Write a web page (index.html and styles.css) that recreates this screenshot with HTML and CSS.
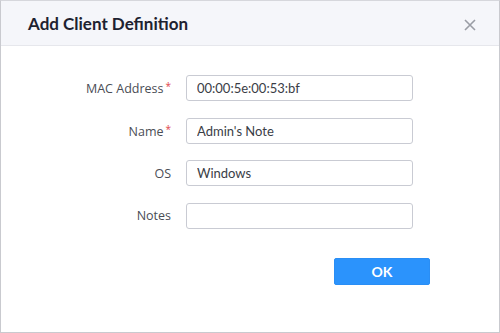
FILE: index.html
```html
<!DOCTYPE html>
<html>
<head>
<meta charset="utf-8">
<link rel="stylesheet" href="styles.css">
</head>
<body>
<div class="dialog">
  <div class="dialog-header">
    <h1 class="dialog-title">Add Client Definition</h1>
    <button class="close-btn" aria-label="Close">
      <svg width="12" height="12" viewBox="0 0 12 12"><path d="M1 1L11 11M11 1L1 11" stroke="#9a9da5" stroke-width="1.6" fill="none"/></svg>
    </button>
  </div>
  <div class="dialog-body">
    <form class="form">
      <label class="form-label">MAC Address<span class="req">*</span></label>
      <input class="form-input" type="text" value="00:00:5e:00:53:bf">
      <label class="form-label">Name<span class="req">*</span></label>
      <input class="form-input" type="text" value="Admin's Note">
      <label class="form-label">OS</label>
      <input class="form-input" type="text" value="Windows">
      <label class="form-label">Notes</label>
      <input class="form-input" type="text" value="">
    </form>
    <div class="actions">
      <button class="ok-btn" type="button">OK</button>
    </div>
  </div>
</div>
</body>
</html>
```
FILE: styles.css
```css
* { box-sizing: border-box; }
html, body { margin: 0; padding: 0; background: #fff; }
body { font-family: "Open Sans", "Noto Sans", sans-serif; }

.dialog {
  width: 500px;
  height: 333px;
  border: 1px solid #c9cacf;
  border-top-color: #d6d7dc;
  background: #fff;
  display: flex;
  flex-direction: column;
}

.dialog-header {
  height: 45px;
  background: #f5f6fa;
  border-bottom: 1px solid #e6e7ec;
  display: flex;
  align-items: center;
  justify-content: space-between;
  padding: 0 23px 0 27px;
}

.dialog-title {
  margin: 0;
  font-family: "Lato", "Open Sans", sans-serif;
  font-size: 17px;
  font-weight: 700;
  color: #1e2230;
  padding-top: 1px;
}

.close-btn {
  border: 0;
  background: none;
  padding: 0;
  width: 12px;
  height: 12px;
  display: flex;
  margin-top: 3px;
}

.dialog-body {
  padding: 29px 0 0 0;
}

.form {
  display: grid;
  grid-template-columns: 170px 227px;
  column-gap: 15px;
  row-gap: 16.5px;
  align-items: center;
}

.form-label {
  text-align: right;
  font-size: 12.5px;
  color: #4a4d55;
}

.req {
  color: #e0464b;
  font-size: 10px;
  vertical-align: 3px;
  margin-left: 2px;
}

.form-input {
  height: 26px;
  border: 1px solid #c9cbd3;
  border-radius: 3px;
  padding: 0 10px;
  font-family: "Lato", "Open Sans", sans-serif;
  font-size: 13px;
  color: #3a3d46;
  outline: none;
}

.actions {
  display: flex;
  justify-content: flex-end;
  padding-right: 69px;
  margin-top: 29px;
}

.ok-btn {
  width: 96px;
  height: 27px;
  border: 1px solid #2a8ef5;
  border-radius: 2px;
  background: #2b93fc;
  color: #fff;
  font-family: "Lato", "Open Sans", sans-serif;
  font-size: 14px;
  font-weight: 700;
}
```
